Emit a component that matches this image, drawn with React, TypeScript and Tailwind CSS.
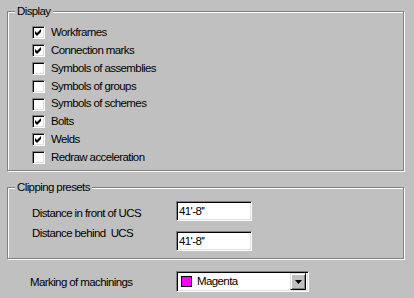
import { ReactNode } from "react";

const options = [
  { label: "Workframes", checked: true },
  { label: "Connection marks", checked: true },
  { label: "Symbols of assemblies", checked: false },
  { label: "Symbols of groups", checked: false },
  { label: "Symbols of schemes", checked: false },
  { label: "Bolts", checked: true },
  { label: "Welds", checked: true },
  { label: "Redraw acceleration", checked: false },
];

const Checkbox = ({ checked }: { checked: boolean }) => (
  <div className="w-[13px] h-[13px] shrink-0 bg-white border border-t-[#808080] border-l-[#808080] border-r-white border-b-white shadow-[inset_1px_1px_0_#000,inset_-1px_-1px_0_#dfdfdf] flex items-center justify-center">
    {checked && (
      <svg width="7" height="7" viewBox="0 0 7 7">
        <path d="M0 2 L2 4 L6 0 L6 3 L2 7 L0 5 Z" fill="#000" />
      </svg>
    )}
  </div>
);

const GroupBox = ({ title, className, children }: { title: string; className: string; children: ReactNode }) => (
  <div className={`relative border border-[#808080] shadow-[inset_1px_1px_0_#fff,1px_1px_0_#fff] ${className}`}>
    <span className="absolute -top-[8px] left-[7px] bg-[#c0c0c0] px-[2px] leading-[14px]">{title}</span>
    {children}
  </div>
);

const TextField = ({ value }: { value: string }) => (
  <div className="w-[76px] h-[20px] bg-white border border-t-[#808080] border-l-[#808080] border-r-white border-b-white shadow-[inset_1px_1px_0_#000,inset_-1px_-1px_0_#dfdfdf] pl-[2px] leading-[18px]">
    {value}
  </div>
);

export default function App() {
  return (
    <div
      className="w-[414px] h-[298px] bg-[#c0c0c0] text-black text-[11.5px] tracking-[-0.6px] pt-[11px] pl-[7px] overflow-hidden"
      style={{ fontFamily: '"Liberation Sans", Arial, sans-serif' }}
    >
      {/* display */}
      <GroupBox title="Display" className="w-[397px] h-[160px]">
        <div className="pt-[12px] pl-[24px]">
          {options.map((o) => (
            <div key={o.label} className="h-[17.8px] flex items-center gap-[6px]">
              <Checkbox checked={o.checked} />
              <span>{o.label}</span>
            </div>
          ))}
        </div>
      </GroupBox>

      {/* clipping presets */}
      <GroupBox title="Clipping presets" className="w-[397px] h-[72px] mt-[16px]">
        <div className="flex">
          <div className="w-[168px] pl-[24px] pt-[15px] leading-[20px]">
            <div>Distance in front of UCS</div>
            <div>Distance behind&nbsp; UCS</div>
          </div>
          <div className="pt-[13px] flex flex-col gap-[10px]">
            <TextField value="41'-8''" />
            <TextField value="41'-8''" />
          </div>
        </div>
      </GroupBox>

      {/* machinings */}
      <div className="flex items-center mt-[12px]">
        <span className="w-[169px] pl-[23px] pt-[2px]">Marking of machinings</span>
        <div className="w-[133px] h-[21px] bg-white border border-t-[#808080] border-l-[#808080] border-r-white border-b-white shadow-[inset_1px_1px_0_#000,inset_-1px_-1px_0_#dfdfdf] flex items-center pl-[4px] pr-[2px]">
          <div className="w-[11px] h-[11px] bg-[#ff00ff] border border-black" />
          <span className="ml-[5px] flex-1">Magenta</span>
          <div className="w-[16px] h-[17px] bg-[#c0c0c0] border border-t-[#dfdfdf] border-l-[#dfdfdf] border-r-black border-b-black shadow-[inset_1px_1px_0_#fff,inset_-1px_-1px_0_#808080] flex items-center justify-center">
            <svg width="7" height="4" viewBox="0 0 7 4">
              <path d="M0 0 H7 L3.5 4 Z" fill="#000" />
            </svg>
          </div>
        </div>
      </div>
    </div>
  );
}
